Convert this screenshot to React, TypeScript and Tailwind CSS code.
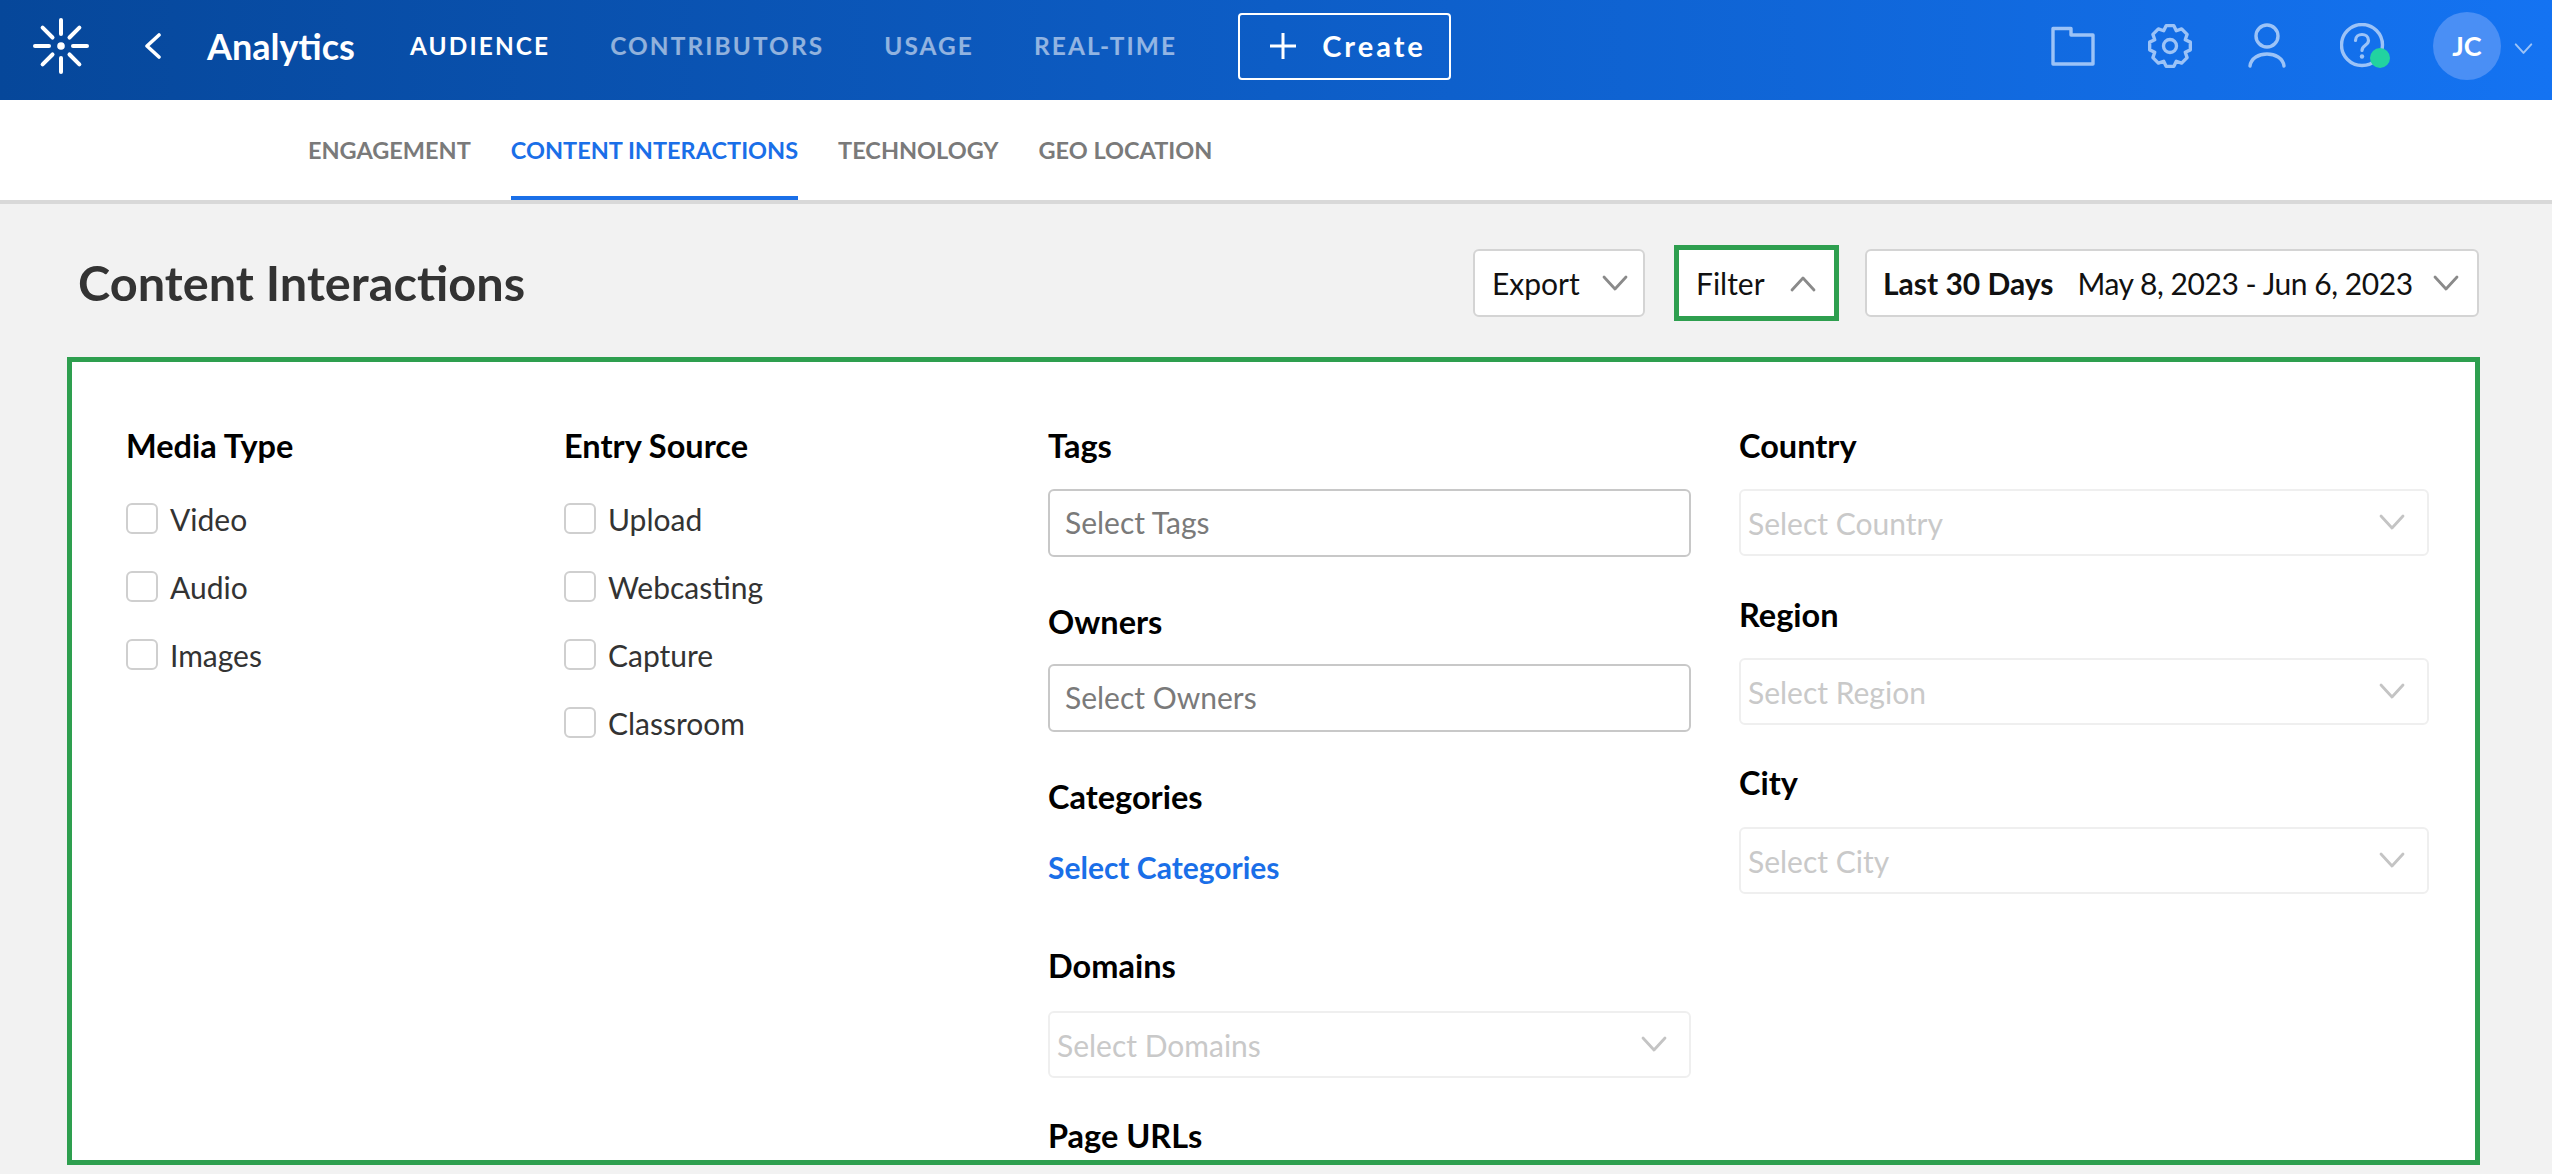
import React from "react";

const gearPath = (() => {
  const teeth = 8;
  const pts: string[] = [];
  for (let i = 0; i < teeth; i++) {
    const a = (i / teeth) * Math.PI * 2 - Math.PI / 2;
    const step = (Math.PI * 2) / teeth;
    const seq: [number, number][] = [
      [8.6, -0.5],
      [10.8, -0.24],
      [10.8, 0.24],
      [8.6, 0.5],
    ];
    seq.forEach(([r, f]) => {
      const t = a + f * step;
      pts.push(`${(12 + r * Math.cos(t)).toFixed(2)} ${(12 + r * Math.sin(t)).toFixed(2)}`);
    });
  }
  return "M" + pts.join("L") + "Z";
})();

function Logo() {
  return (
    <svg width="60" height="60" viewBox="-30 -30 60 60" className="shrink-0">
      {[0, 45, 90, 135, 180, 225, 270, 315].map((a) => (
        <line key={a} x1="0" y1="-12" x2="0" y2="-26" stroke="#fff" strokeWidth="4" strokeLinecap="round" transform={`rotate(${a})`} />
      ))}
      <circle r="3.8" fill="#fff" />
    </svg>
  );
}

function Chevron({ up = false, className = "" }: { up?: boolean; className?: string }) {
  return (
    <svg width="26" height="17" viewBox="0 0 26 17" fill="none" className={className}>
      <path d={up ? "M2 15 L13 3 L24 15" : "M2 2 L13 14 L24 2"} stroke="currentColor" strokeWidth="2.8" strokeLinecap="round" strokeLinejoin="round" />
    </svg>
  );
}

function TopIcons() {
  const c = "#9cc3f7";
  return (
    <div className="flex items-center">
      <svg width="44" height="40" viewBox="0 0 44 40" fill="none">
        <path d="M2 2.5 H20 V9 H42 V38 H2 Z" stroke={c} strokeWidth="3.4" strokeLinejoin="round" />
      </svg>
      <svg width="46" height="46" viewBox="0 0 24 24" fill="none" className="ml-[52px]">
        <path d={gearPath} stroke={c} strokeWidth="1.75" strokeLinejoin="round" />
        <circle cx="12" cy="12" r="3.4" stroke={c} strokeWidth="1.75" />
      </svg>
      <svg width="38" height="46" viewBox="0 0 38 46" fill="none" className="ml-[55px]">
        <circle cx="19" cy="13" r="11" stroke={c} strokeWidth="3.4" />
        <path d="M2 43 C4 27 34 27 36 43" stroke={c} strokeWidth="3.4" strokeLinecap="round" />
      </svg>
      <div className="relative ml-[54px] h-[46px] w-[46px]">
        <svg width="46" height="46" viewBox="0 0 46 46" fill="none">
          <circle cx="22" cy="22" r="20.5" stroke={c} strokeWidth="3.4" />
          <path d="M15.5 17.5 C15.5 9.5 28.5 9.5 28.5 17.5 C28.5 22.5 22 22 22 27.5" stroke={c} strokeWidth="3.2" strokeLinecap="round" />
          <circle cx="22" cy="33.5" r="2.2" fill={c} />
        </svg>
        <span className="absolute left-[30px] top-[25px] h-[20px] w-[20px] rounded-full bg-[#22d3a0]" />
      </div>
    </div>
  );
}

function Header() {
  return (
    <header className="flex h-[100px] items-center bg-[linear-gradient(90deg,#06479a,#1473f2)] pb-[8px]">
      <div className="ml-[31px]"><Logo /></div>
      <svg width="18" height="26" viewBox="0 0 18 26" fill="none" className="ml-[53px]">
        <path d="M15 2 L3 13 L15 24" stroke="#fff" strokeWidth="3.6" strokeLinecap="round" strokeLinejoin="round" />
      </svg>
      <span className="ml-[45px] w-[148px] whitespace-nowrap text-[36px] font-bold text-white">Analytics</span>
      <nav className="ml-[55px] flex items-center gap-[60px] text-[24.4px] font-bold tracking-[2.1px]">
        <span className="text-white">AUDIENCE</span>
        <span className="text-white/55">CONTRIBUTORS</span>
        <span className="text-white/55">USAGE</span>
        <span className="text-white/55">REAL-TIME</span>
      </nav>
      <button className="ml-[61px] flex h-[67px] w-[213px] items-center rounded-[4px] border-2 border-white pl-[28px] text-[29px] font-bold tracking-[3px] text-white">
        <svg width="30" height="30" viewBox="0 0 30 30" fill="none" className="mr-[24px]">
          <path d="M15 2 V28 M2 15 H28" stroke="#fff" strokeWidth="3" />
        </svg>
        Create
      </button>
      <div className="ml-auto flex items-center pr-[19px]">
        <TopIcons />
        <div className="ml-[47px] flex h-[68px] w-[68px] items-center justify-center rounded-full bg-[#4a8ff5] text-[27px] font-bold text-white">JC</div>
        <Chevron className="ml-[13px] mt-[6px] h-[12px] w-[19px] text-[#9cc3f7]" />
      </div>
    </header>
  );
}

function Tabs() {
  const item = "flex h-full items-center pt-[1px] text-[23.5px] font-bold text-[#7a7a7a]";
  return (
    <div className="flex h-[104px] gap-[40px] border-b-4 border-[#d9d9d9] bg-white pl-[308px]">
      <span className={item}>ENGAGEMENT</span>
      <span className="flex h-full items-center border-b-4 border-[#1a6fe8] pt-[5px] text-[23.5px] font-bold text-[#1a6fe8]">CONTENT INTERACTIONS</span>
      <span className={item}>TECHNOLOGY</span>
      <span className={item}>GEO LOCATION</span>
    </div>
  );
}

function Toolbar() {
  const btn = "flex h-[68px] items-center rounded-[6px] border-2 border-[#d4d4d4] bg-white pt-[2px] text-[30px] text-[#111]";
  return (
    <div className="flex h-[153px] items-center pl-[78px] pr-[73px] pt-[4px]">
      <h1 className="text-[48.7px] font-bold text-[#333]">Content Interactions</h1>
      <div className="ml-auto flex items-center">
        <div className={`${btn} w-[172px] pl-[17px]`}>
          Export
          <Chevron className="ml-auto mr-[15px] text-[#8a8a8a]" />
        </div>
        <div className="ml-[29px] h-[76px] w-[165px] border-[5px] border-[#2e9f4f]">
          <div className="flex h-full items-center bg-white pl-[17px] pt-[2px] text-[30px] text-[#111]">
            Filter
            <Chevron up className="ml-auto mr-[18px] text-[#8a8a8a]" />
          </div>
        </div>
        <div className={`${btn} ml-[26px] w-[614px] pl-[16px]`}>
          <b className="font-bold">Last 30 Days</b>
          <span className="ml-[24px] tracking-[-0.45px]">May 8, 2023 - Jun 6, 2023</span>
          <Chevron className="ml-auto mr-[18px] text-[#8a8a8a]" />
        </div>
      </div>
    </div>
  );
}

function Label({ children, className = "" }: { children: React.ReactNode; className?: string }) {
  return <div className={`h-[36px] whitespace-nowrap text-[32.5px] font-bold leading-[34px] text-black ${className}`}>{children}</div>;
}

function CheckRow({ text }: { text: string }) {
  return (
    <div className="flex h-[31px] items-center">
      <span className="h-[31px] w-[32px] rounded-[6px] border-2 border-[#cfcfcf] bg-white" />
      <span className="ml-[12px] pt-[2px] text-[30px] text-[#333]">{text}</span>
    </div>
  );
}

function CheckColumn({ title, items, width }: { title: string; items: string[]; width: string }) {
  return (
    <div className={`shrink-0 ${width}`}>
      <Label>{title}</Label>
      <div className="mt-[38px] flex flex-col gap-[37px]">
        {items.map((t) => <CheckRow key={t} text={t} />)}
      </div>
    </div>
  );
}

function TextBox({ text }: { text: string }) {
  return (
    <div className="mt-[24px] flex h-[68px] items-center rounded-[6px] border-2 border-[#c8c8c8] bg-white pb-[2px] pl-[15px] text-[30px] text-[#7a7a7a]">{text}</div>
  );
}

function Disabled({ text, className = "" }: { text: string; className?: string }) {
  return (
    <div className={`flex h-[67px] items-center rounded-[6px] border-2 border-[#efefef] bg-white pl-[7px] pr-[22px] text-[30px] text-[#c9c9c9] ${className}`}>
      <span className="pt-[2px]">{text}</span>
      <Chevron className="ml-auto text-[#c4c4c4]" />
    </div>
  );
}

function FilterPanel() {
  return (
    <section className="ml-[67px] mr-[72px] flex h-[808px] overflow-hidden border-[5px] border-[#2e9f4f] bg-white pl-[54px] pt-[67px]">
      <CheckColumn title="Media Type" items={["Video", "Audio", "Images"]} width="w-[438px]" />
      <CheckColumn title="Entry Source" items={["Upload", "Webcasting", "Capture", "Classroom"]} width="w-[484px]" />
      <div className="w-[643px] shrink-0">
        <Label>Tags</Label>
        <TextBox text="Select Tags" />
        <Label className="mt-[48px]">Owners</Label>
        <div className="-mt-px"><TextBox text="Select Owners" /></div>
        <Label className="mt-[48px]">Categories</Label>
        <div className="mt-[33px] h-[36px] text-[30px] font-bold leading-[36px] text-[#1a6fe8]">Select Categories</div>
        <Label className="mt-[64px]">Domains</Label>
        <Disabled text="Select Domains" className="mt-[26px]" />
        <Label className="mt-[41px]">Page URLs</Label>
      </div>
      <div className="ml-[48px] w-[690px] shrink-0">
        <Label>Country</Label>
        <Disabled text="Select Country" className="mt-[24px]" />
        <Label className="mt-[42px]">Region</Label>
        <Disabled text="Select Region" className="mt-[24px]" />
        <Label className="mt-[41px]">City</Label>
        <Disabled text="Select City" className="mt-[25px]" />
      </div>
    </section>
  );
}

export default function App() {
  return (
    <div className="h-[1174px] w-[2552px] overflow-hidden bg-[#f2f2f2] font-['Lato',sans-serif]">
      <Header />
      <Tabs />
      <Toolbar />
      <FilterPanel />
    </div>
  );
}
